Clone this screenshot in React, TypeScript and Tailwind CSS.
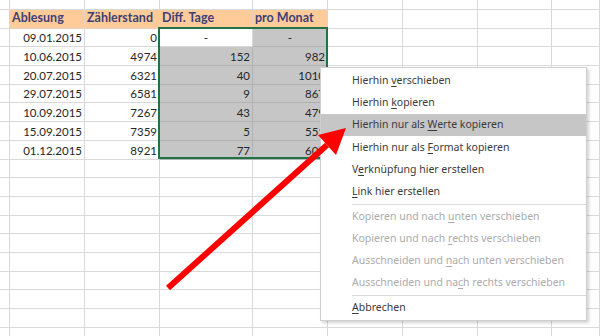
import React from "react";

const cols = [10, 75, 75, 93, 75, 75, 75, 74];
const headers = ["Ablesung", "Zählerstand", "Diff. Tage", "pro Monat"];
const data = [
  ["09.01.2015", "0", "-", "-"],
  ["10.06.2015", "4974", "152", "982"],
  ["20.07.2015", "6321", "40", "1010"],
  ["29.07.2015", "6581", "9", "867"],
  ["10.09.2015", "7267", "43", "479"],
  ["15.09.2015", "7359", "5", "551"],
  ["01.12.2015", "8921", "77", "608"],
];

type Item = { pre: string; key: string; post: string; disabled?: boolean; active?: boolean; sep?: boolean };

const items: Item[] = [
  { pre: "Hierhin ", key: "v", post: "erschieben" },
  { pre: "Hierhin ", key: "k", post: "opieren" },
  { pre: "Hierhin nur als ", key: "W", post: "erte kopieren", active: true },
  { pre: "Hierhin nur als ", key: "F", post: "ormat kopieren" },
  { pre: "V", key: "e", post: "rknüpfung hier erstellen" },
  { pre: "", key: "L", post: "ink hier erstellen", sep: true },
  { pre: "Kopieren und nach ", key: "u", post: "nten verschieben", disabled: true },
  { pre: "Kopieren und nach ", key: "r", post: "echts verschieben", disabled: true },
  { pre: "Ausschneiden und ", key: "n", post: "ach unten verschieben", disabled: true },
  { pre: "Ausschneiden und na", key: "c", post: "h rechts verschieben", disabled: true, sep: true },
  { pre: "", key: "A", post: "bbrechen" },
];

function Cell({ row, col }: { row: number; col: number }) {
  const base = "border-r border-b overflow-hidden whitespace-nowrap flex items-center px-[2px]";
  // header row
  if (row === 1 && col >= 1 && col <= 4) {
    return (
      <div className={`${base} border-[#e6d2bd] bg-[#ffcc99] font-bold text-[12.5px] text-[#3f3f76] items-end`}>
        {headers[col - 1]}
      </div>
    );
  }
  if (row >= 2 && row <= 8 && col >= 1 && col <= 4) {
    const v = data[row - 2][col - 1];
    const selected = col >= 3 && !(row === 2 && col === 3);
    const dash = v === "-";
    return (
      <div
        className={`${base} ${selected ? "bg-[#c6c6c6] border-[#b2b2b2]" : "bg-white border-[#d9d9d9]"} ${
          dash ? "justify-center" : "justify-end"
        } text-[11.5px] text-[#262626] pt-[1px]`}
      >
        {v}
      </div>
    );
  }
  return <div className={`${base} border-[#d9d9d9]`} />;
}

export default function App() {
  const rows = Array.from({ length: 19 }, (_, i) => i);
  return (
    <div className="relative w-[600px] h-[336px] overflow-hidden bg-white font-['Lato',sans-serif]">
      <div className="grid grid-cols-[10px_75px_75px_93px_75px_75px_75px_74px_1fr] grid-rows-[10px_repeat(18,18.7px)]">
        {rows.map((r) =>
          [...cols, 0].map((_, c) => <Cell key={`${r}-${c}`} row={r} col={c} />)
        )}
      </div>

      {/* selection frame */}
      <div className="absolute left-[158px] top-[27px] w-[170px] h-[132px] border-2 border-[#217346]" />

      {/* context menu */}
      <div className="absolute left-[320px] top-[67px] w-[267px] h-[254px] bg-white border border-[#cfcfcf] shadow-[2px_2px_3px_rgba(0,0,0,0.18)] pt-[1.5px] font-['Noto_Sans',sans-serif] text-[10.5px]">
        {items.map((it, i) => (
          <React.Fragment key={i}>
            <div
              className={`h-[22.3px] flex items-center pl-[31px] ${it.active ? "bg-[#c6c6c6]" : ""} ${
                it.disabled ? "text-[#ababab]" : "text-[#3b3b3b]"
              }`}
            >
              <span>
                {it.pre}
                <span className="underline underline-offset-2">{it.key}</span>
                {it.post}
              </span>
            </div>
            {it.sep && (
              <div className="h-[2px] flex items-center pl-[31px]">
                <div className="h-px w-full bg-[#dadada]" />
              </div>
            )}
          </React.Fragment>
        ))}
      </div>

      {/* red arrow */}
      <svg className="absolute inset-0 pointer-events-none" width="600" height="336" viewBox="0 0 600 336">
        <line x1="168" y1="288" x2="327" y2="145" stroke="#ff0000" strokeWidth="6" />
        <polygon points="346,128 336,155 318,135" fill="#ff0000" />
      </svg>
    </div>
  );
}
